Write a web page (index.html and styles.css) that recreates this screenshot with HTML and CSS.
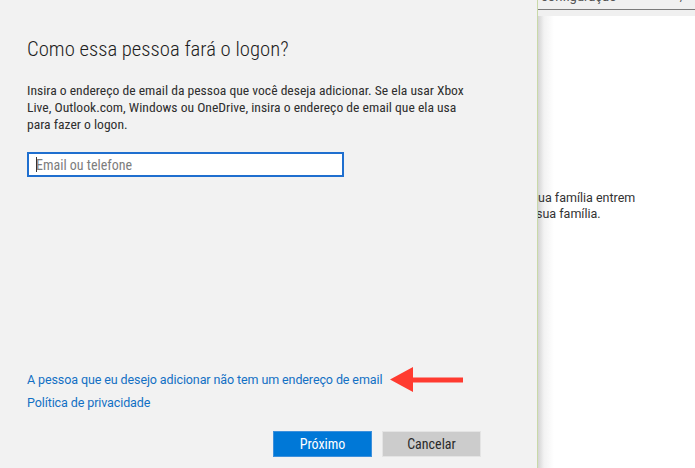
FILE: index.html
```html
<!DOCTYPE html>
<html lang="pt-BR">
<head>
    <meta charset="UTF-8">
    <meta name="viewport" content="width=device-width, initial-scale=1.0">
    <title>Adicionar pessoa</title>
    <link rel="stylesheet" href="styles.css">
</head>
<body>
    <div class="screen">
        <div class="dialog">
            <h1>Como essa pessoa fará o logon?</h1>
            <p class="intro">Insira o endereço de email da pessoa que você deseja adicionar. Se ela usar Xbox Live, Outlook.com, Windows ou OneDrive, insira o endereço de email que ela usa para fazer o logon.</p>
            <div class="field">
                <input type="text" class="email" placeholder="Email ou telefone">
                <span class="caret"></span>
            </div>
            <div class="links">
                <div class="link-row">
                    <a href="#" class="link">A pessoa que eu desejo adicionar não tem um endereço de email</a>
                    <svg class="arrow" width="74" height="26" viewBox="0 0 74 26">
                        <polygon points="0,12.5 23,0 23,10.5 73,10.5 73,15.5 23,15.5 23,25" fill="#ff3b30"/>
                    </svg>
                </div>
                <a href="#" class="link">Política de privacidade</a>
            </div>
            <div class="actions">
                <button class="btn primary">Próximo</button>
                <button class="btn">Cancelar</button>
            </div>
        </div>
        <div class="panel">
            <div class="panel-top">
                <span class="crumb">configuração</span>
                <span class="crumb">/</span>
            </div>
            <div class="panel-body">
                <p class="panel-line">ua família entrem</p>
                <p class="panel-line cut">sua família.</p>
            </div>
        </div>
    </div>
</body>
</html>
```

FILE: styles.css
```css
body {
    margin: 0;
    padding: 0;
    font-family: Roboto, "Noto Sans", sans-serif;
    background-color: #ffffff;
}

.screen {
    display: flex;
    width: 695px;
    height: 468px;
    overflow: hidden;
}

.dialog {
    width: 538px;
    flex-shrink: 0;
    display: flex;
    flex-direction: column;
    padding: 36px 0 0 27px;
    box-sizing: border-box;
    background-color: #f2f2f2;
    border-right: 1px solid #c9d9a8;
}

h1 {
    margin: 0;
    font-family: "Roboto Condensed", Roboto, sans-serif;
    font-size: 20.7px;
    font-weight: 300;
    line-height: 26px;
    color: #1e1e1e;
}

.intro {
    width: 445px;
    margin: 20px 0 0;
    font-family: "Roboto Condensed", Roboto, sans-serif;
    font-size: 13.6px;
    line-height: 17px;
    color: #2e2e2e;
}

.field {
    position: relative;
    width: 317px;
    margin-top: 19px;
}

.email {
    display: block;
    width: 317px;
    height: 25px;
    padding: 0 7px;
    box-sizing: border-box;
    border: 2px solid #1f6fcf;
    background-color: #ffffff;
    font-family: "Roboto Condensed", Roboto, sans-serif;
    font-size: 14px;
    outline: none;
}

.email::placeholder {
    color: #7d7d7d;
}

.caret {
    position: absolute;
    left: 9px;
    top: 5px;
    width: 1px;
    height: 15px;
    background-color: #333333;
}

.links {
    margin-top: auto;
    display: flex;
    flex-direction: column;
    gap: 5px;
}

.link-row {
    display: flex;
    align-items: center;
    gap: 8px;
    height: 18px;
}

.link {
    color: #1270c4;
    font-size: 12.5px;
    letter-spacing: -0.1px;
    text-decoration: none;
    line-height: 18px;
}

.arrow {
    flex-shrink: 0;
}

.actions {
    display: flex;
    justify-content: flex-end;
    gap: 10px;
    padding: 19px 56px 11px 0;
}

.btn {
    width: 99px;
    height: 26px;
    border: 1px solid #e4e4e4;
    background-color: #cccccc;
    color: #2b2b2b;
    font-family: "Roboto Condensed", Roboto, sans-serif;
    font-size: 14px;
    padding: 0;
}

.btn.primary {
    background-color: #0078d7;
    border-color: #3d90dc;
    color: #ffffff;
}

.panel {
    flex: 1;
    background: linear-gradient(to right, #d4d4d4 0, #f2f2f2 6px, #ffffff 16px);
}

.panel-top {
    height: 9px;
    border-bottom: 1px solid #7a7a7a;
    background-color: #f0f0f0;
    display: flex;
    justify-content: space-between;
    overflow: hidden;
    padding: 0 10px 0 3px;
    font-size: 13px;
    color: #555555;
}

.crumb {
    line-height: 13px;
    margin-top: -10px;
}

.panel-body {
    border-top: 6px solid #f0f0f0;
    padding-top: 174px;
    overflow: hidden;
}

.panel-line {
    margin: 0;
    font-size: 12.5px;
    line-height: 16px;
    color: #333333;
    white-space: nowrap;
}

.panel-line.cut {
    margin-left: -2px;
}
```
